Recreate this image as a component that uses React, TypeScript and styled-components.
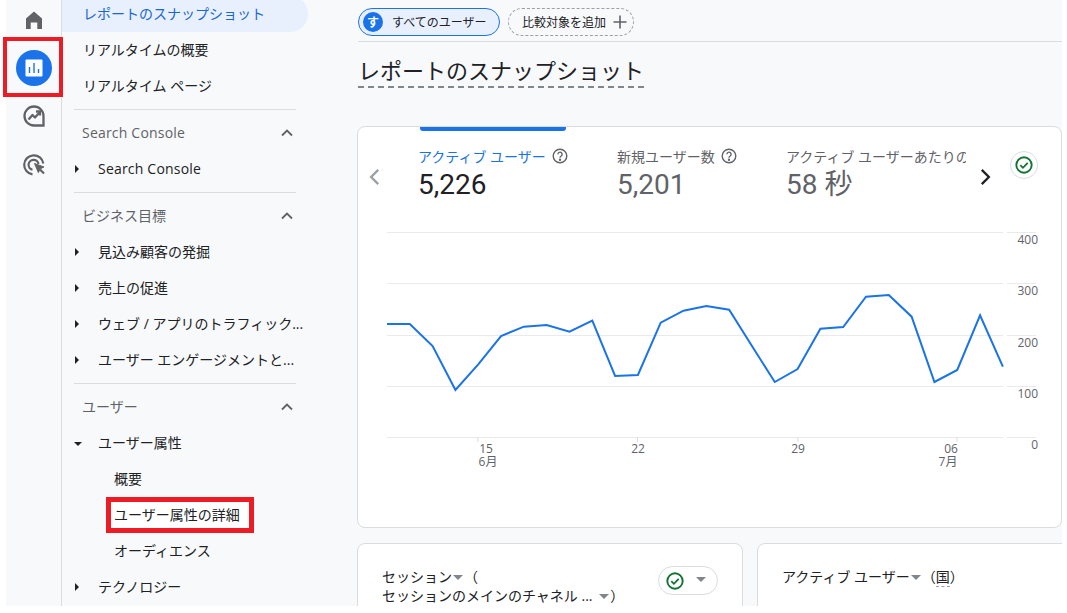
import React from "react";
import styled, { createGlobalStyle } from "styled-components";

const CJK = `"Noto Sans CJK JP"`;
const UI = `"Open Sans", ${CJK}, sans-serif`;

const Global = createGlobalStyle`
  html, body { margin: 0; padding: 0; background: #fff; }
  body { width: 1067px; height: 613px; overflow: hidden; font-family: ${UI}; }
  * { box-sizing: border-box; }
`;

const Frame = styled.div`
  display: flex;
  height: 606px;
  margin: 0 5px 0 6px;
  background: #f8f9fb;
`;

const Rail = styled.nav`
  flex: 0 0 56px;
  display: flex;
  flex-direction: column;
  align-items: center;
  padding: 6px 0 0 0;
  border-right: 1px solid #dadce0;
`;

const RailSlot = styled.div<{ $gap: number; $h: number }>`
  position: relative;
  width: 100%;
  height: ${(p) => p.$h}px;
  margin-top: ${(p) => p.$gap}px;
  display: flex;
  align-items: center;
  justify-content: center;
`;

const RailRed = styled.div`
  position: absolute;
  left: -3px;
  right: -2px;
  top: -10px;
  bottom: -8px;
  border: 4px solid #ed1c24;
`;

const Side = styled.aside`
  flex: 0 0 246px;
  margin-top: -4px;
  position: relative;
`;

const NavRow = styled.div<{ $active?: boolean; $indent?: number }>`
  position: relative;
  height: 36px;
  width: 246px;
  display: flex;
  align-items: center;
  padding-left: ${(p) => p.$indent ?? 21}px;
  font-size: 14px;
  line-height: 20px;
  color: ${(p) => (p.$active ? "#1967d2" : "#202124")};
  background: ${(p) => (p.$active ? "#e8f0fe" : "transparent")};
  border-radius: 0 18px 18px 0;
  white-space: nowrap;
`;

const Latin = styled.span`
  letter-spacing: 0.2px;
`;

const Arrow = styled.span<{ $open?: boolean }>`
  position: absolute;
  left: 13px;
  top: 50%;
  width: 0;
  height: 0;
  ${(p) =>
    p.$open
      ? `margin-top:-1px;margin-left:-1px;border-left:4px solid transparent;border-right:4px solid transparent;border-top:4px solid #202124;`
      : `margin-top:-4px;border-top:4px solid transparent;border-bottom:4px solid transparent;border-left:4px solid #202124;`}
`;

const Divider = styled.div`
  height: 1px;
  margin: 5px 12px 5px 12px;
  width: 222px;
  background: #dadce0;
`;

const SectionHead = styled.div`
  height: 36px;
  width: 232px;
  padding: 0 0 2px 20px;
  display: flex;
  align-items: center;
  justify-content: space-between;
  font-size: 14px;
  color: #5f6368;

  svg {
    margin-top: 2px;
  }
`;

const Main = styled.main`
  flex: 1;
  min-width: 0;
  padding-left: 49px;
  display: flex;
  flex-direction: column;
  overflow: hidden;
`;

const PillBar = styled.div`
  height: 42px;
  flex: none;
  margin-left: 1px;
  display: flex;
  align-items: flex-start;
  padding-top: 8px;
  gap: 8px;
  border-bottom: 1px solid #dadce0;
`;

const SegmentPill = styled.div`
  height: 28px;
  width: 142px;
  border: 1px solid #1a73e8;
  border-radius: 14px;
  background: #e8f0fe;
  display: flex;
  align-items: center;
  padding-left: 4px;
  gap: 9px;
  font-size: 12px;
  color: #202124;
`;

const Badge = styled.span`
  width: 20px;
  height: 20px;
  border-radius: 50%;
  background: #1a73e8;
  color: #fff;
  font-size: 12px;
  font-weight: 700;
  display: flex;
  align-items: center;
  justify-content: center;
`;

const AddPill = styled.div`
  height: 28px;
  width: 126px;
  border: 1px dashed #9aa0a6;
  border-radius: 14px;
  display: flex;
  align-items: center;
  padding-left: 13px;
  gap: 6px;
  font-size: 12px;
  color: #202124;
`;

const TitleRow = styled.div`
  height: 84px;
  flex: none;
  padding: 13px 0 0 1px;
`;

const Title = styled.h1`
  display: inline-block;
  margin: 0;
  height: 33px;
  font-size: 22px;
  line-height: 30px;
  font-weight: 400;
  color: #202124;
  border-bottom: 2px dashed #80868b;
`;

const Card = styled.section`
  flex: none;
  position: relative;
  height: 402px;
  background: #fff;
  border: 1px solid #dadce0;
  border-radius: 8px;
  margin-bottom: 15px;
`;

const TabStrip = styled.div`
  display: flex;
  align-items: flex-start;
  height: 90px;
  padding-left: 8px;
`;

const NavArrow = styled.div<{ $w: number }>`
  flex: 0 0 ${(p) => p.$w}px;
  height: 100%;
  padding-top: 41px;
  display: flex;
  justify-content: center;
`;

const Tab = styled.div<{ $w: number; $gap?: number; $active?: boolean }>`
  position: relative;
  flex: 0 0 ${(p) => p.$w}px;
  margin-left: ${(p) => p.$gap ?? 0}px;
  padding-top: 19px;
  overflow: hidden;
  white-space: nowrap;
  color: ${(p) => (p.$active ? "#202124" : "#5f6368")};
`;

const ActiveBar = styled.div`
  position: absolute;
  left: 2px;
  top: 0;
  width: 146px;
  height: 4px;
  background: #1a73e8;
  border-radius: 0 0 3px 3px;
`;

const TabLabel = styled.div<{ $active?: boolean }>`
  display: flex;
  align-items: center;
  gap: 6px;
  height: 20px;
  font-size: 14px;
  color: ${(p) => (p.$active ? "#1a73e8" : "#5f6368")};
`;

const TabValue = styled.div`
  font-size: 28px;
  line-height: 38px;
  font-family: Roboto, ${CJK}, sans-serif;
`;

const CheckBtn = styled.div`
  flex: none;
  width: 28px;
  height: 28px;
  margin: 24px 0 0 7px;
  border: 1px solid #dadce0;
  border-radius: 50%;
  display: flex;
  align-items: center;
  justify-content: center;
`;

const ChartSvg = styled.svg`
  display: block;
  margin-left: 28px;
`;

const Lower = styled.div`
  flex: none;
  display: flex;
  gap: 14px;
`;

const SmallCard = styled.section<{ $w: number }>`
  flex: 0 0 ${(p) => p.$w}px;
  height: 200px;
  background: #fff;
  border: 1px solid #dadce0;
  border-radius: 8px;
  padding: 23px 24px 0 24px;
  display: flex;
  justify-content: space-between;
  font-size: 14px;
  line-height: 19px;
  color: #202124;
`;

const SmallTitle = styled.div`
  white-space: nowrap;
`;

const Drop = styled.span`
  display: inline-block;
  width: 0;
  height: 0;
  margin: 0 1px 2px 1px;
  border-left: 5px solid transparent;
  border-right: 5px solid transparent;
  border-top: 5px solid #80868b;
`;

const WideDrop = styled(Drop)`
  margin-left: 3px;
`;

const DottedChar = styled.span`
  border-bottom: 1px dashed #9aa0a6;
`;

const StatusPill = styled.div`
  flex: none;
  width: 60px;
  height: 29px;
  margin-top: -1px;
  border: 1px solid #dadce0;
  border-radius: 15px;
  display: flex;
  align-items: center;
  justify-content: space-between;
  padding: 0 10px 0 7px;
`;

const RowRed = styled.div`
  position: absolute;
  left: 44px;
  top: 0;
  width: 148px;
  height: 36px;
  border: 5px solid #ed1c24;
  background: #fff;
`;

const RowText = styled.span`
  position: relative;
`;

const HomeIcon = () => (
  <svg width="24" height="24" viewBox="0 0 24 24" fill="#5f6368">
    <path d="M4 21V10.500L12 3.500l8 7V21h-4.700v-6.500H8.700V21z" />
  </svg>
);

const ReportsIcon = () => (
  <svg width="36" height="36" viewBox="0 0 36 36">
    <circle cx="18" cy="18" r="18" fill="#1a73e8" />
    <rect x="9.500" y="9.500" width="17" height="17" rx="1" fill="#fff" />
    <path d="M13.500 17v6M18 13v10M22.500 19v4" stroke="#1a73e8" strokeWidth="1.400" />
  </svg>
);

const ExploreIcon = () => (
  <svg width="24" height="24" viewBox="0 0 24 24" fill="none" stroke="#5f6368" strokeWidth="2.300">
    <path d="M21.500 12a9.500 9.500 0 1 0-9.500 9.500h9.500z" />
    <path d="M6.500 15.500l4-4.500 2.500 2.500 4.500-5" strokeLinejoin="round" />
    <path d="M14 7.500h4v4" />
  </svg>
);

const AdsIcon = () => (
  <svg width="24" height="24" viewBox="0 0 24 24" fill="none" stroke="#5f6368" strokeWidth="2.200">
    <path d="M10.500 21.400A9.600 9.600 0 1 1 21.300 10.500" />
    <path d="M10.500 16.700a5 5 0 1 1 6-5.700" />
    <path d="M12.500 10.500l9.500 3.500-3.800 1.800-1.800 3.800z" fill="#5f6368" stroke="#5f6368" strokeWidth="1" strokeLinejoin="round" />
    <path d="M18 16.500l4 4" />
  </svg>
);

const Chevron = ({ dir, color, size = 14 }: { dir: "l" | "r" | "u"; color: string; size?: number }) => (
  <svg width={size} height={size} viewBox="0 0 14 14" fill="none" stroke={color} strokeWidth="1.800">
    {dir === "l" && <path d="M9.500 1.500L4 7l5.500 5.500" />}
    {dir === "r" && <path d="M4.500 1.500L10 7l-5.500 5.500" />}
    {dir === "u" && <path d="M2 9.500l5-5 5 5" />}
  </svg>
);

const HelpIcon = () => (
  <svg width="16" height="16" viewBox="0 0 16 16" fill="none" stroke="#5f6368" strokeWidth="1.400">
    <circle cx="8" cy="8" r="6.800" />
    <path d="M5.900 6.300a2.100 2.100 0 1 1 3.300 1.700c-.8.500-1.200.9-1.200 1.800" />
    <circle cx="8" cy="11.700" r=".5" fill="#5f6368" />
  </svg>
);

const CheckIcon = () => (
  <svg width="18" height="18" viewBox="0 0 18 18" fill="none">
    <circle cx="9" cy="9" r="7.700" stroke="#137333" strokeWidth="1.900" />
    <path d="M5.300 9.200l2.600 2.600 4.800-5" stroke="#137333" strokeWidth="1.800" />
  </svg>
);

const PlusIcon = () => (
  <svg width="16" height="16" viewBox="0 0 16 16" stroke="#5f6368" strokeWidth="1.600">
    <path d="M8 1.500v13M1.500 8h13" />
  </svg>
);

const rawY = [312, 312, 378, 510, 433, 348, 320, 315, 335, 302, 468, 465, 308, 272, 258, 269, 378, 486, 447, 326, 321, 230, 225, 290, 486, 450, 286, 440];
const OX = 386;
const OY = 217;
const points = rawY.map((y, i) => `${387 + i * 22.81 - OX},${220 + y / 3 - OY}`).join(" ");
const gridY = [232.5, 283.5, 335.5, 386.5, 437.5].map((y) => y - OY);
const yLabels = [
  { t: "400", y: 244 },
  { t: "300", y: 295 },
  { t: "200", y: 347 },
  { t: "100", y: 398 },
  { t: "0", y: 449 },
];
const xTicks = [478, 637.5, 798, 957];
const xLabels = [
  { t: "15", x: 486, y: 453 },
  { t: "6月", x: 488, y: 466 },
  { t: "22", x: 638, y: 453 },
  { t: "29", x: 798, y: 453 },
  { t: "06", x: 951, y: 453 },
  { t: "7月", x: 948, y: 466 },
];

const labelStyle = { fontSize: 12, fill: "#5f6368", fontFamily: UI };

const Chart = () => (
  <ChartSvg width="660" height="258" viewBox="0 0 660 258">
    {gridY.map((y) => (
      <g key={y} stroke="#e8eaed" strokeWidth="1">
        <line x1="1" x2="617" y1={y} y2={y} />
        <line x1="621" x2="650" y1={y} y2={y} />
      </g>
    ))}
    {xTicks.map((x) => (
      <line key={x} x1={x - OX} x2={x - OX} y1={437.5 - OY} y2={442 - OY} stroke="#dadce0" />
    ))}
    <polyline points={points} fill="none" stroke="#1a73e8" strokeWidth="2" />
    {yLabels.map((l) => (
      <text key={l.t} x={652} y={l.y - OY} textAnchor="end" style={labelStyle}>
        {l.t}
      </text>
    ))}
    {xLabels.map((l) => (
      <text key={l.t} x={l.x - OX} y={l.y - OY} textAnchor="middle" style={labelStyle}>
        {l.t}
      </text>
    ))}
  </ChartSvg>
);

const Section = ({ title, children }: { title: React.ReactNode; children: React.ReactNode }) => (
  <>
    <SectionHead>
      {title}
      <Chevron dir="u" color="#5f6368" />
    </SectionHead>
    {children}
  </>
);

export default function App() {
  return (
    <>
      <Global />
      <Frame>
        <Rail>
          <RailSlot $gap={0} $h={28}>
            <HomeIcon />
          </RailSlot>
          <RailSlot $gap={13} $h={42}>
            <RailRed />
            <ReportsIcon />
          </RailSlot>
          <RailSlot $gap={13} $h={28}>
            <ExploreIcon />
          </RailSlot>
          <RailSlot $gap={21} $h={28}>
            <AdsIcon />
          </RailSlot>
        </Rail>
        <Side>
          <NavRow $active>レポートのスナップショット</NavRow>
          <NavRow>リアルタイムの概要</NavRow>
          <NavRow>リアルタイム ページ</NavRow>
          <Divider />
          <Section title={<Latin>Search Console</Latin>}>
            <NavRow $indent={36}>
              <Arrow />
              <Latin>Search Console</Latin>
            </NavRow>
          </Section>
          <Divider />
          <Section title="ビジネス目標">
            <NavRow $indent={36}>
              <Arrow />
              見込み顧客の発掘
            </NavRow>
            <NavRow $indent={36}>
              <Arrow />
              売上の促進
            </NavRow>
            <NavRow $indent={36}>
              <Arrow />
              ウェブ / アプリのトラフィック...
            </NavRow>
            <NavRow $indent={36}>
              <Arrow />
              ユーザー エンゲージメントと...
            </NavRow>
          </Section>
          <Divider />
          <Section title="ユーザー">
            <NavRow $indent={36}>
              <Arrow $open />
              ユーザー属性
            </NavRow>
            <NavRow $indent={52}>概要</NavRow>
            <NavRow $indent={52}>
              <RowRed />
              <RowText>ユーザー属性の詳細</RowText>
            </NavRow>
            <NavRow $indent={52}>オーディエンス</NavRow>
            <NavRow $indent={36}>
              <Arrow />
              テクノロジー
            </NavRow>
          </Section>
        </Side>
        <Main>
          <PillBar>
            <SegmentPill>
              <Badge>す</Badge>
              すべてのユーザー
            </SegmentPill>
            <AddPill>
              比較対象を追加
              <PlusIcon />
            </AddPill>
          </PillBar>
          <TitleRow>
            <Title>レポートのスナップショット</Title>
          </TitleRow>
          <Card>
            <TabStrip>
              <NavArrow $w={18}>
                <Chevron dir="l" color="#9aa0a6" size={18} />
              </NavArrow>
              <Tab $w={199} $gap={34} $active>
                <ActiveBar />
                <TabLabel $active>
                  アクティブ ユーザー
                  <HelpIcon />
                </TabLabel>
                <TabValue>5,226</TabValue>
              </Tab>
              <Tab $w={169}>
                <TabLabel>
                  新規ユーザー数
                  <HelpIcon />
                </TabLabel>
                <TabValue>5,201</TabValue>
              </Tab>
              <Tab $w={180}>
                <TabLabel>アクティブ ユーザーあたりの平均エンゲージメント時間</TabLabel>
                <TabValue>58 秒</TabValue>
              </Tab>
              <NavArrow $w={37}>
                <Chevron dir="r" color="#202124" size={18} />
              </NavArrow>
              <CheckBtn>
                <CheckIcon />
              </CheckBtn>
            </TabStrip>
            <Chart />
          </Card>
          <Lower>
            <SmallCard $w={386}>
              <SmallTitle>
                セッション
                <Drop />（
                <br />
                セッションのメインのチャネル ... <WideDrop />）
              </SmallTitle>
              <StatusPill>
                <CheckIcon />
                <Drop />
              </StatusPill>
            </SmallCard>
            <SmallCard $w={400}>
              <SmallTitle>
                アクティブ ユーザー
                <Drop />（<DottedChar>国</DottedChar>）
              </SmallTitle>
            </SmallCard>
          </Lower>
        </Main>
      </Frame>
    </>
  );
}
